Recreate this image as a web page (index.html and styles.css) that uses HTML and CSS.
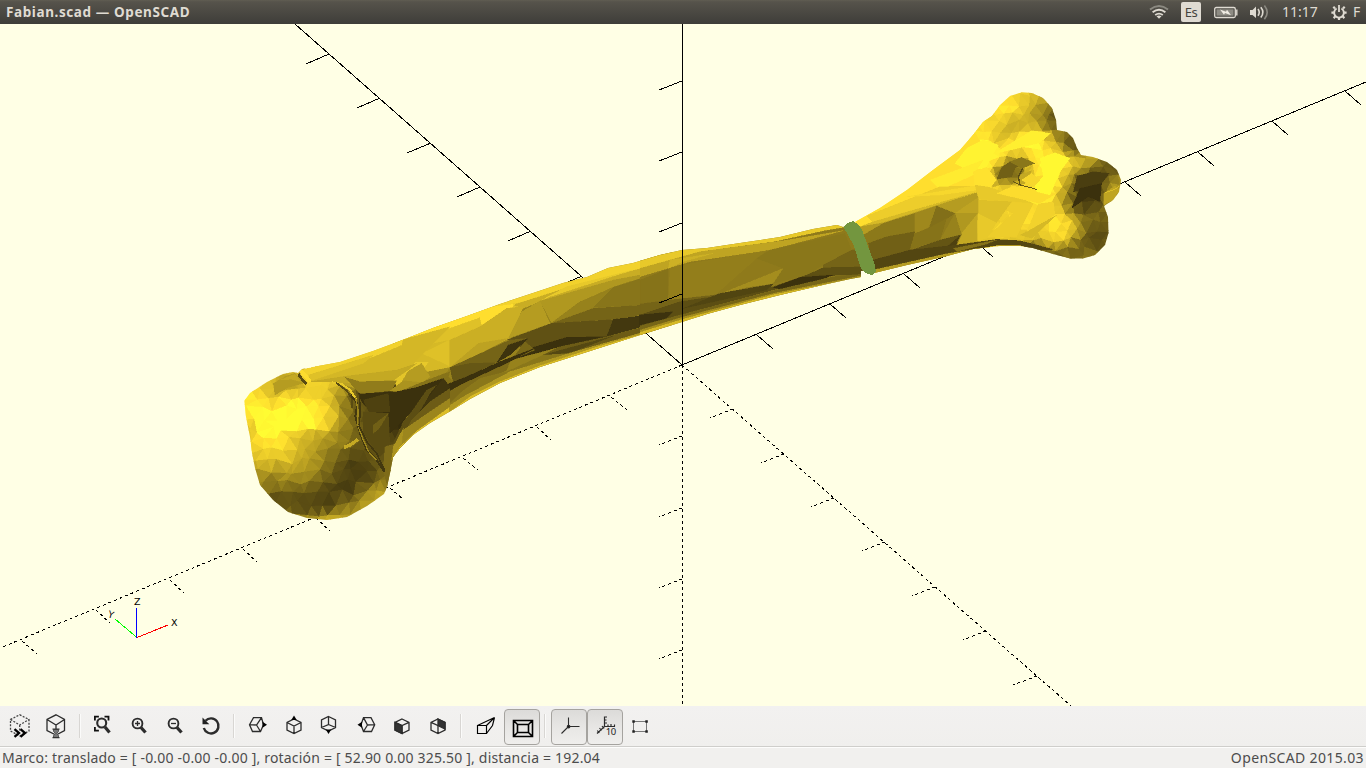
FILE: index.html
```html
<!DOCTYPE html>
<html lang="es">
<head>
<meta charset="utf-8">
<title>Fabian.scad — OpenSCAD</title>
<link rel="stylesheet" href="styles.css">
</head>
<body>
<div class="window">
<header class="titlebar">
  <span class="title">Fabian.scad — OpenSCAD</span>
  <div class="indicators">
    <svg class="ind-wifi" width="20" height="24" viewBox="1149 0 20 24" fill="none" stroke-width="1.9"><path stroke="#8b8981" d="M1150 9.5Q1159 2.500 1168 9.500"/><path stroke="#dfdbd2" d="M1152.600 12.300Q1159 7.300 1165.400 12.300M1155.200 15Q1159 12.200 1162.800 15"/><path fill="#dfdbd2" d="M1156.500 16.300Q1159 14.800 1161.500 16.300L1159 18.800Z"/></svg>
    <span class="ind-lang">Es</span>
    <svg class="ind-battery" width="24" height="24" viewBox="1214 0 24 24"><rect x="1214.700" y="7.500" width="20.600" height="10" rx="1.500" fill="none" stroke="#dfdbd2" stroke-width="1.300"/><rect x="1216.500" y="9.300" width="17" height="6.400" fill="#8e8c84"/><path d="M1236.800 9.500v6" stroke="#dfdbd2" stroke-width="1.400"/><path d="M1220 9.500L1226 11.800L1227 9.800L1231 15.200L1225 13L1224 14.800Z" fill="#f0ece3"/></svg>
    <svg class="ind-sound" width="20" height="24" viewBox="1250 0 20 24" fill="none" stroke-width="1.600"><path fill="#dfdbd2" d="M1250 10h2.500L1256 6.500V18L1252.500 15H1250Z"/><path stroke="#dfdbd2" d="M1258 9Q1260.500 12.400 1258 15.700M1260.800 7.300Q1265 12.400 1260.800 17.500"/><path stroke="#8b8981" d="M1264.400 5.500Q1270 12.400 1264.400 19.200"/></svg>
    <span class="clock">11:17</span>
    <svg class="ind-gear" width="16" height="24" viewBox="1331 0 16 24" fill="none" stroke="#dfdbd2"><path d="M1336.600 8.500A4.900 4.900 0 1 0 1341.400 8.500" stroke-width="2"/><path d="M1339 5v7" stroke-width="1.800"/><path d="M1335 8.500l-1.700-1.700M1343 8.500l1.700-1.700M1333.800 12.700h-2.400M1344.200 12.700h2.400M1335.400 16.300l-1.800 1.800M1342.600 16.300l1.800 1.800M1339 17.500v2.600" stroke-width="2.200"/></svg>
    <span class="user">F</span>
  </div>
</header>

<main class="viewport">
<svg class="scene" width="1366" height="682" viewBox="0 24 1366 682">
  <defs>
    <clipPath id="distal"><path d="M244.300 400.700L250 393L267 382L283 374L293 372L298 373L302 369L340 362L373 351L400 341L433 328L467 316L500 304L533 293L563 283L587 277L608 268L633 263L660 255L682 250L707 248L740 243L780 237L813 229L837 225L843 227L850 225L867 270L861 271V277L850 279L827 284L780 295L740 305L707 314L682 322L640 335L587 352L540 367L500 383L470 399L449 412L430 423L413 435L400 448L393 457L390 473L387 487L384 494L367 506L347 517L327 520L307 518L288 512L273 500L260 485L255 468L252 453L250 437L246 417Z"/></clipPath>
    <clipPath id="proximal"><path d="M855 222L880 208L907 190L933 170L960 150L973 135L983 122L992 116L1000 105L1010 96L1022 92.300L1032 93L1043 98L1052 108L1056 120L1057 130L1067 132L1073 138L1077 148L1081 155L1093 157L1107 162L1117 170L1121 180L1119 192L1113 200L1104 206L1108 217L1108.500 233L1105 245L1095 255L1083 258.500L1070 258.500L1053 254L1033 248L1020 246L1000 246L973 249L947 256L907 265L870 274Z"/></clipPath>
  </defs>
  <g class="axis">
    <path d="M295 24L682 365L1366 82M757 335l16 14M830 304l16 14M904 274l16 14M977 243l16 14M1125 182l16 14M1198 152l16 14M1272 121l16 14M1345 91l16 14M329 54l-23 10M380 98l-23 10M431 143l-24 10M480 187l-23 10M531 231l-23 10M582 276l-23 10"/>
    <path class="dashed" d="M682 365L0 648M682 365L1071 706M611 397l16 13M537 427l14 13M463 458l15 12M390 488l14 12M316 518l14 13M243 549l14 13M170 580l14 13M96 610l14 13M22 641l15 13M733 409l-23 9M784 454l-23 9M834 498l-23 9M885 542l-23 9M935 587l-23 9M986 631l-23 9M1037 676l-24 9"/>
  </g>
  <g clip-path="url(#distal)" id="boneDistal"></g>
  <g clip-path="url(#proximal)" id="boneProximal"></g>
  <path class="band" d="M843.500 227L847 223L853 221L858 224L862 230L875 265L876 272L872 275L865 273L861 269L854 246Z"/>
  <g class="axis">
    <path d="M682.500 24V365M682 81l-23 9M682 152l-23 9M682 223l-23 9M682 294l-23 9"/>
    <path class="dashed" d="M682.500 365V706M682 436l-23 9M682 508l-23 9M682 579l-23 9M682 650l-23 9"/>
  </g>
  <g class="gizmo">
    <path stroke="#f00" d="M137 637.500L168 625"/><path stroke="#0f0" d="M137 637.500L115 619"/><path stroke="#00f" d="M136.500 637.500V608"/>
    <text x="134" y="605">Z</text><text x="171" y="626">X</text><text x="108" y="618" transform="rotate(16 111 615)">Y</text>
  </g>
</svg>
</main>

<nav class="toolbar">
  <button class="tool"><svg viewBox="2 706 36 40"><path d="M19.700 714.800L29 719.500V731L19.700 736L10.500 731V719.500ZM10.500 719.500L19.700 725L29 719.500M19.700 725V731" stroke-dasharray="2 1.400" stroke="#444"/><path d="M14.500 729.200l4.500 3.800-4.500 3.800M20.500 729.200l4.500 3.800-4.500 3.800" stroke="#000" stroke-width="2.300"/></svg></button>
  <button class="tool"><svg viewBox="38 706 36 40"><path d="M56 714.800L64.500 719.500V730.500L56 735L47 730.500V719.500ZM47 719.500L56 725L64.500 719.500M56 725V730"/><path fill="#777" stroke="#555" stroke-width="1" d="M53.500 729.500h5v2l-2 2 2 2v2h-5v-2l2-2-2-2Z"/><path stroke="#333" d="M52.500 729.200h7M52.500 737.700h7"/></svg></button>
  <span class="sep sep-a"></span>
  <button class="tool"><svg viewBox="84 706 36 40"><path stroke="#111" stroke-width="1.800" d="M94.900 720.500v-3.900h4M104.500 716.600h4v3.900M94.900 727v3.700h4"/><circle cx="101.700" cy="723" r="4.500" stroke-width="2.100"/><path stroke-width="3.200" d="M105 727l4.500 5.500"/></svg></button>
  <button class="tool"><svg viewBox="120 706 36 40"><circle cx="137.500" cy="723.500" r="4.900" stroke-width="1.900"/><path d="M135 723.500h5M137.500 721v5"/><path stroke-width="3.300" d="M141 727.500l4.500 5"/></svg></button>
  <button class="tool"><svg viewBox="156 706 36 40"><circle cx="173.500" cy="723.500" r="4.900" stroke-width="1.900"/><path d="M171 723.500h5"/><path stroke-width="3.300" d="M177 727.500l4.500 5"/></svg></button>
  <button class="tool"><svg viewBox="192 706 36 40"><path stroke-width="2.400" d="M205.500 720.800A7.500 7.500 0 1 1 203.800 728"/><path fill="#222" stroke="none" d="M202.500 717.500V724.200H209.300Z"/></svg></button>
  <span class="sep sep-b"></span>
  <button class="tool"><svg viewBox="239 706 36 40"><path d="M249.500 724.700L253.500 717.600L261.500 717.600L263.500 724.800L260.500 731.500L252.500 731.500ZM249.500 724.700L256.500 725L261.500 717.600M256.500 725L260.500 731.500"/><path class="tip" d="M262.500 721.800L267 724.800L262.500 727.800Z"/></svg></button>
  <button class="tool"><svg viewBox="275 706 36 40"><path d="M294 719L301 722.500V730L294 733.500L287 730V722.500ZM287 722.500L294 726L301 722.500M294 726V733.500"/><path class="tip" d="M291.300 720L294 715.500L296.700 720Z"/></svg></button>
  <button class="tool"><svg viewBox="311 706 36 40"><path d="M328.500 716.500L335.500 720V727.500L328.500 731L321.500 727.500V720ZM328.500 716.500V724.500L321.500 727.500M328.500 724.500L335.500 727.500"/><path class="tip" d="M325.800 729.500L328.500 734L331.200 729.500Z"/></svg></button>
  <button class="tool"><svg viewBox="347 706 36 40"><path d="M374.700 724.700L371 717.600L363.500 717.600L361 724.800L363.500 731.500L371.500 731.500ZM374.700 724.700L367.500 725L363.500 717.600M367.500 725L363.500 731.500"/><path class="tip" d="M362 721.800L357.500 724.800L362 727.800Z"/></svg></button>
  <button class="tool"><svg viewBox="383 706 36 40"><path d="M402 719L409 722.300V730L402 733.500L395 730V722.300ZM395 722.300L402 725.600L409 722.300M402 725.600V733.500"/><path fill="#333" d="M395 722.300L402 725.600V733.500L395 730Z"/></svg></button>
  <button class="tool"><svg viewBox="419 706 36 40"><path d="M438 719L445 722.300V730L438 733.500L431 730V722.300ZM431 722.300L438 725.600L445 722.300M438 725.600V733.500"/><path fill="#333" d="M438 719L445 722.300V729L438 725.600Z"/></svg></button>
  <span class="sep sep-c"></span>
  <button class="tool"><svg viewBox="467 706 36 40"><path stroke="#000" stroke-width="1.150" d="M477.500 725.500H486.500V733.500H477.500ZM477.500 725.500L494.500 717.500L486.500 725.500M494.500 717.500L492.500 725.500L486.500 733.500"/></svg></button>
  <button class="tool pressed"><svg viewBox="503 706 36 40"><path stroke="#000" stroke-width="1.600" d="M513.500 720.500H532.500V736.500H513.500ZM517.500 724.500H528.500V732.500H517.500ZM513.500 720.500l4 4M532.500 720.500l-4 4M513.500 736.500l4-4M532.500 736.500l-4-4"/></svg></button>
  <span class="sep sep-d"></span>
  <button class="tool pressed"><svg viewBox="550 706 36 40"><path stroke-width="1.100" d="M568.500 717.500V726.500H579.500M568.500 726.500L561.500 733.500"/><circle cx="568.600" cy="726.600" r="1.200" fill="#111"/></svg></button>
  <button class="tool pressed"><svg viewBox="586 706 36 40"><path stroke-width="1.200" d="M604.500 716.500V726.500H615M604.500 726.500L597 733.500M604.500 717h2.500M604.500 720h2M604.500 723h2.500M608 726.500v-2M611 726.500v-2.500M614.500 726.500v-2M602 726l2 2.500M599.500 728l2 2.500M597.300 730.500l2 2.500"/><text x="605.700" y="735.200">10</text></svg></button>
  <button class="tool"><svg viewBox="622 706 36 40"><path stroke="#777" stroke-width="1" d="M633.500 721.500H646.500V731.500H633.500Z"/><path fill="#222" stroke="none" d="M632.300 720.300h2.500v2.500h-2.500ZM645.300 720.300h2.500v2.500h-2.500ZM632.300 730.300h2.500v2.500h-2.500ZM645.300 730.300h2.500v2.500h-2.500Z"/></svg></button>
</nav>

<footer class="statusbar"><span class="camera">Marco: translado = [ -0.00 -0.00 -0.00 ], rotación = [ 52.90 0.00 325.50 ], distancia = 192.04</span><span class="version">OpenSCAD 2015.03</span></footer>
</div>
<script src="mesh.js"></script>
</body>
</html>
```

FILE: styles.css
```css
* { box-sizing: border-box; }
body { margin: 0; overflow: hidden; font-family: "Noto Sans", "Open Sans", sans-serif; }
.window { width: 1366px; height: 768px; display: flex; flex-direction: column; background: #f1f0ee; }
.titlebar { height: 24px; flex: none; display: flex; align-items: center; justify-content: space-between; padding-left: 6px; background: linear-gradient(#605d52 0, #56534b 8%, #3e3d39 100%); color: #dfdbd2; }
.title { font-size: 13.500px; font-weight: 700; line-height: 24px; white-space: pre; letter-spacing: .6px; }
.indicators { width: 217px; height: 24px; display: flex; align-items: center; font-size: 14px; }
.indicators svg { display: block; flex: none; }
.ind-lang { width: 20px; height: 20px; margin: 0 13px 0 12px; border-radius: 2px; background: #dfdbd2; color: #45433e; font-size: 13px; line-height: 20px; text-align: center; letter-spacing: -.5px; }
.ind-sound { margin-left: 12px; }
.clock { width: 37px; margin: 0 12px; line-height: 24px; white-space: nowrap; }
.user { margin-left: 6px; line-height: 24px; }
.viewport { height: 682px; flex: none; background: #ffffe5; }
.scene { display: block; shape-rendering: crispEdges; }
.axis path { fill: none; stroke: #000; stroke-width: 1; }
.axis .dashed { stroke-dasharray: 3 3; }
.band { fill: #73963f; }
.gizmo path { fill: none; stroke-width: 1; }
.gizmo text { font: 9.500px "DejaVu Sans", sans-serif; fill: #000; }
.toolbar { height: 40px; flex: none; padding-left: 2px; display: flex; align-items: center; background: linear-gradient(#f2f1f0, #f0efed); }
.tool { position: relative; width: 36px; height: 40px; flex: none; padding: 0; border: 0; background: none; }
.tool svg { display: block; width: 36px; height: 40px; position: relative; fill: none; stroke: #2c2c2c; stroke-width: 1.300; }
.tool text { font: 9.500px "Noto Sans", sans-serif; fill: #222; stroke: none; letter-spacing: -.3px; }
.tool .tip { fill: #000; stroke: none; }
.tool.pressed::before { content: ""; position: absolute; left: 1px; top: 3px; width: 34px; height: 34px; border: 1px solid #a5a39f; border-radius: 4px; background: linear-gradient(#dcdbd9, #e9e8e6 60%, #efeeec); }
.sep { height: 24px; flex: none; background: linear-gradient(90deg, transparent 5px, #d8d6d3 5px 6px, #fbfbfa 6px 7px, transparent 7px); }
.sep-a { width: 10px; }
.sep-b { width: 11px; }
.sep-c { width: 12px; }
.sep-d { width: 11px; }
.statusbar { height: 22px; flex: none; display: flex; justify-content: space-between; padding: 0 2px; border-top: 1px solid #cfcecb; box-shadow: inset 0 1px #fdfdfc; color: #4c4c4c; font-size: 14px; line-height: 22px; white-space: nowrap; letter-spacing: .19px; }
.version { letter-spacing: .37px; }
```

FILE: mesh.js
```javascript
// Flat-shaded rendering of the two bone pieces.
const NS = 'http://www.w3.org/2000/svg';
const ramp = [[0, 52, 43, 12], [25, 98, 83, 20], [50, 151, 130, 28], [70, 201, 173, 36], [85, 234, 203, 42], [93, 255, 222, 46], [100, 255, 252, 50]];
function shade(v) {
  v = Math.max(0, Math.min(100, v));
  let i = 1;
  while (i < ramp.length - 1 && ramp[i][0] < v) i++;
  const a = ramp[i - 1], b = ramp[i], t = (v - a[0]) / (b[0] - a[0]);
  return 'rgb(' + [1, 2, 3].map(k => Math.round(a[k] + (b[k] - a[k]) * t)).join(',') + ')';
}
function layer(id, x, y) {
  const g = document.createElementNS(NS, 'g');
  g.setAttribute('transform', `translate(${x} ${y}) scale(.33333)`);
  document.getElementById(id).appendChild(g);
  return g;
}
function facet(g, v, pts) {
  const p = document.createElementNS(NS, 'polygon'), c = shade(v);
  p.setAttribute('points', pts);
  p.setAttribute('fill', c);
  p.setAttribute('stroke', c);
  p.setAttribute('stroke-width', '1');
  g.appendChild(p);
}
function streak(g, v, w, pts) {
  const p = document.createElementNS(NS, 'polyline');
  p.setAttribute('points', pts);
  p.setAttribute('fill', 'none');
  p.setAttribute('stroke', shade(v));
  p.setAttribute('stroke-width', w);
  g.appendChild(p);
}
// Triangulated surface whose facet brightness is interpolated from light samples.
function mosaic(g, x0, y0, x1, y1, step, samples) {
  const s = samples.trim().split(/\s+/).map(t => t.split(',').map(Number));
  const rnd = n => { const r = Math.sin(n * 127.1) * 43758.5453; return r - Math.floor(r); };
  const at = (i, j) => [x0 + (i + (j % 2) * .5 + (rnd(i * 57 + j * 131) - .5) * .6) * step, y0 + (j + (rnd(i * 91 + j * 37 + 7) - .5) * .6) * step * .9];
  const light = (x, y) => {
    let n = 0, d = 0;
    for (const q of s) {
      const w = Math.exp(-((q[0] - x) ** 2 + (q[1] - y) ** 2) / 560) + 1e-9;
      n += w * q[2]; d += w;
    }
    return n / d;
  };
  const nx = (x1 - x0) / step, ny = (y1 - y0) / (step * .9);
  for (let j = 0; j < ny; j++) for (let i = -1; i < nx; i++) {
    const a = at(i, j), b = at(i + 1, j), c = at(i, j + 1), d = at(i + 1, j + 1);
    const tris = j % 2 ? [[a, b, d], [a, d, c]] : [[a, b, c], [b, d, c]];
    tris.forEach((t, k) => {
      const cx = (t[0][0] + t[1][0] + t[2][0]) / 3, cy = (t[0][1] + t[1][1] + t[2][1]) / 3;
      facet(g, light(cx, cy) + 2 + (rnd(i * 17 + j * 71 + k * 3) - .5) * 7, t.map(p => p.join(',')).join(' '));
    });
  }
}
function facets(g, list) { list.forEach(f => facet(g, f[0], f[1])); }

// Shaft, middle section
const mid = layer('boneDistal', 400, 230);
facets(mid, [
  [50, '-20,700 -20,200 820,60 820,320'],
  [88, '-10,333 140,270 400,180 625,105 790,70 790,100 600,150 420,200 240,265 -10,350'],
  [80, '-10,350 240,262 340,222 440,200 250,290 150,330 -10,365'],
  [93, '-10,333 140,278 280,230 345,222 330,240 245,285 240,262 -10,350'],
  [70, '340,225 480,180 780,100 780,125 640,150 420,215 370,235'],
  [84, '420,213 500,170 700,120 620,145 450,200'],
  [76, '-10,365 150,330 150,412 60,430 -10,440'],
  [80, '65,370 148,330 148,408'],
  [71, '150,330 240,290 320,235 370,230 330,325 150,412'],
  [84, '-10,395 85,397 60,430 15,450'],
  [62, '420,213 365,245 325,325 450,280'],
  [65, '150,412 235,340 325,325 250,365'],
  [60, '420,213 640,170 540,215 455,278'],
  [60, '420,213 640,150 790,122 640,170 540,205'],
  [50, '455,278 540,215 780,125 780,145 580,235'],
  [43, '580,232 640,172 790,125 790,222'],
  [34, '455,280 580,235 780,222 780,245 640,268'],
  [24, '320,330 455,280 650,268 620,320 500,322 380,370 340,330'],
  [8, '640,268 780,250 780,275 620,320'],
  [4, '500,322 620,320 480,350 400,372 330,390 390,355'],
  [30, '620,320 780,278 780,290 520,370 430,375 480,350'],
  [18, '430,375 520,350 640,318 520,365 450,380'],
  [34, '150,412 330,330 380,325 290,395 180,440'],
  [5, '325,345 385,325 330,375 290,398'],
  [35, '335,390 375,335 405,360'],
  [27, '150,412 210,400 290,398 160,460'],
  [55, '-10,450 60,430 150,412 130,440 60,460 -10,470'],
  [42, '-10,470 60,460 135,430 160,455 80,485 -10,490'],
  [8, '-10,490 90,485 190,455 120,520 100,545 -10,560'],
  [28, '0,480 40,485 65,515 0,515'],
  [38, '90,545 120,500 200,455 330,395 320,420 200,480 120,545'],
  [4, '80,487 200,440 300,395 410,352 330,395 190,460 120,495'],
  [44, '130,540 185,485 240,445 320,425 430,375 520,370 330,440'],
  [60, '120,545 190,500 330,425 540,360 780,293 780,302 420,412 300,460 160,545'],
  [78, '150,545 210,500 300,455 420,407 600,348 780,298 780,306 600,360 420,418 300,468']
]);
// Shaft, section next to the cut
const cut = layer('boneDistal', 640, 200);
facets(cut, [
  [46, '0,150 700,60 700,300 0,420'],
  [84, '0,175 127,145 420,105 590,65 620,80 560,90 400,125 180,155 0,205'],
  [66, '0,205 180,155 430,122 610,92 390,150 150,185 0,230'],
  [72, '85,205 90,180 220,160 130,185'],
  [42, '0,240 85,207 85,300 0,315'],
  [48, '125,195 380,152 350,175 220,290 125,298 85,295 90,205'],
  [44, '350,175 390,150 615,100 635,150 550,195 430,205'],
  [55, '430,205 400,250 320,262 220,290'],
  [44, '430,205 550,195 500,225 400,250'],
  [34, '550,195 635,150 680,150 690,200 550,203'],
  [23, '500,225 550,203 690,200 690,222 550,228'],
  [34, '0,312 90,300 240,283 200,300 0,345'],
  [22, '0,345 120,305 220,290 400,260 500,225 580,225 400,270 120,345 0,380'],
  [16, '130,325 240,280 400,252 380,270 200,310'],
  [4, '400,262 480,232 580,225 500,255 430,270'],
  [5, '-3,345 100,335 80,355 -3,376'],
  [35, '0,378 120,345 400,272 580,230 670,222 670,228 400,280 127,350 0,390'],
  [55, '0,390 127,352 400,280 670,226 670,236 127,362 0,402'],
  [76, '0,397 127,358 400,284 670,230 670,245 127,372 0,415']
]);
// Head and neck of the distal piece
const head = layer('boneDistal', 230, 350);
mosaic(head, 20, 50, 490, 530, 35, `190,75,70 150,85,72 110,105,84 240,80,88 80,125,90 130,120,66 170,105,60 210,110,70 250,110,84 300,105,82 345,100,62
50,155,93 90,160,97 130,150,86 180,145,94 230,140,92 280,135,86 320,130,62 350,140,48 375,150,25 60,190,92 100,200,97 145,180,100 190,190,99 240,185,93 280,180,93 305,185,78 340,190,53 370,200,28
60,240,80 100,240,99 150,225,100 200,215,97 260,215,99 290,220,86 320,230,65 350,230,46 370,245,25 75,280,88 110,280,93 150,270,94 195,265,82 235,275,72 280,265,65 320,270,50 350,265,55 380,270,35
75,320,80 120,320,88 160,310,85 205,310,72 250,300,65 290,310,48 330,310,33 370,300,22 410,310,20 85,350,70 130,350,65 170,350,70 210,350,66 250,345,55 290,345,42 330,345,22 370,345,10 410,345,10 450,350,25
90,385,50 130,385,45 170,385,58 210,385,52 250,385,48 290,385,30 330,385,22 370,380,14 410,385,14 450,385,30 475,390,50 110,420,45 150,415,38 190,420,30 230,420,35 270,415,25 310,420,12 350,410,5 390,415,25 430,415,50 460,420,62
135,450,10 170,445,28 210,450,15 250,450,12 290,445,8 330,445,25 370,445,30 410,450,60 440,445,68 160,475,28 200,475,12 240,475,20 280,470,12 320,470,30 360,475,50 400,470,66 190,490,40 230,505,60 280,505,65 330,500,68
400,140,20 420,200,22 450,170,15 450,230,28 400,250,30 430,280,22 460,260,12 480,300,20 440,320,22 490,220,2 470,340,45`);
facets(head, [
  [75, '222,62 330,20 660,-70 570,20 500,95 400,100 310,95 240,95'],
  [88, '330,30 520,-40 515,-15 430,20 320,55 235,80 215,60'],
  [80, '235,75 430,15 400,40 245,92'],
  [68, '240,95 350,78 500,60 560,40 535,60 490,92 385,97'],
  [62, '500,95 540,60 575,40 600,80 575,100 530,120'],
  [82, '490,93 535,60 515,95 505,116'],
  [47, '345,82 390,95 500,92 485,122 390,132'],
  [58, '480,122 520,92 580,98 560,110 500,128'],
  [42, '520,120 580,95 660,65 655,80 590,112'],
  [4, '385,132 500,125 560,112 640,85 590,150 530,200 480,250 440,200 398,160'],
  [14, '400,150 475,130 480,185 440,185 425,205'],
  [20, '400,185 475,190 480,290 450,320 400,250'],
  [32, '430,225 475,190 448,235 430,250'],
  [22, '545,185 590,120 620,105 600,130 575,180 530,235 495,280 480,300 520,215'],
  [7, '590,150 640,85 660,110 600,155 560,200'],
  [30, '545,210 600,155 660,115 660,145 600,185 530,240'],
  [52, '500,290 520,240 600,185 660,145 660,180 560,245 500,310'],
  [78, '480,330 500,300 560,243 658,172 658,190 510,310 490,330'],
  [38, '465,290 500,280 493,330 475,420 460,360'],
  [58, '490,290 520,235 515,280 485,330'],
  [62, '130,100 165,80 195,70 222,100 175,112 135,135'],
  [68, '150,90 195,72 212,95 185,88']
]);
streak(head, 20, 8, '205,72 218,90 230,102');
streak(head, 92, 12, '212,62 228,80 240,96');
streak(head, 84, 6, '305,97 335,102 360,120 380,150');
streak(head, 20, 5, '318,98 350,122 365,145 366,175');
streak(head, 8, 6, '362,135 382,160 376,200 392,255 410,300 440,330 463,365');
streak(head, 52, 4, '376,140 384,180 383,225 402,275 416,305 440,330');
streak(head, 8, 5, '388,130 390,180 388,230 410,275 440,310 463,360');
streak(head, 68, 10, '342,292 362,284 384,268');

// Proximal piece
const knee = layer('boneProximal', 840, 80);
facets(knee, [[93, '0,600 0,400 300,200 460,60 460,600'], [46, '40,445 290,385 345,400 412,400 412,600 40,600']]);
mosaic(knee, 410, 20, 860, 560, 30, `510,60,90 545,55,86 580,55,78 610,70,60 480,90,92 515,85,97 550,85,80 585,85,65 615,95,46 638,110,20 445,115,84 480,115,92 520,115,76 560,110,68 600,120,52 630,135,25
430,150,92 470,150,80 510,145,64 550,145,70 590,140,70 630,140,60 648,145,15 400,185,93 440,185,99 480,175,74 520,170,86 560,170,97 600,165,92 640,170,75 670,170,45 695,185,12
360,230,95 410,215,99 460,210,96 500,205,94 540,200,99 590,195,99 630,195,88 660,205,76 690,205,40 705,210,20 400,250,100 450,240,98 490,235,92 530,240,50 570,235,92 600,240,99 640,240,100 680,230,97 720,238,80 760,240,65 800,258,30
390,290,98 440,285,97 480,280,42 510,265,30 540,270,40 570,265,80 600,270,99 640,270,100 680,270,93 710,275,70 740,270,45 780,268,30 820,275,15 380,320,96 430,320,92 480,300,60 520,295,45 560,300,92 590,295,75 620,305,100 650,300,98 680,300,75 700,295,40 730,300,15 770,290,10 800,300,35 825,300,60
400,345,88 450,335,92 510,330,90 560,330,92 600,335,97 640,330,98 675,325,65 705,330,35 735,325,5 770,320,12 800,330,45 825,330,62 430,370,87 480,365,90 540,355,91 600,365,92 640,365,90 670,360,62 700,360,18 740,350,8 775,355,8 800,360,72
440,400,82 500,395,86 560,395,90 620,400,92 660,395,85 690,385,45 720,380,20 760,380,15 785,395,30 440,440,84 500,430,87 560,430,89 610,430,84 650,430,92 680,430,90 710,425,70 735,415,30 765,420,42 795,430,28
440,470,84 500,465,84 550,460,88 590,455,82 640,465,92 680,460,92 710,455,70 735,450,35 770,455,22 795,460,20 440,490,80 540,482,76 600,490,78 640,490,84 680,490,80 720,485,35 750,480,12 780,485,15 797,485,35
590,502,20 640,515,18 680,515,22 720,515,15 760,510,40 730,530,50 690,532,45`);
facets(knee, [
  [93, '40,424 280,262 400,150 430,200 410,340 300,345 90,425'],
  [98, '345,250 380,205 430,180 475,195 440,260 390,275'],
  [96, '270,300 430,240 400,285 300,330'],
  [94, '400,275 440,262 470,300 440,335 405,330'],
  [86, '80,408 300,320 410,318 415,338 280,372 100,428'],
  [90, '200,350 400,318 450,325 300,345'],
  [76, '60,440 100,425 290,370 405,338 290,380 225,400 75,455'],
  [84, '405,315 450,322 580,370 415,358'],
  [86, '415,358 580,370 545,440 530,470 440,472 520,400'],
  [79, '410,360 515,365 470,428 412,400'],
  [84, '413,400 470,428 440,475 413,485'],
  [76, '540,465 650,405 575,475'],
  [88, '595,372 640,365 645,405 560,455'],
  [92, '520,318 590,330 650,340 600,370 470,340'],
  [62, '62,440 130,428 285,378 410,338 415,360 345,400 290,378 225,400 130,445 70,465'],
  [45, '70,465 130,430 225,400 225,455 140,470 85,490'],
  [53, '225,400 290,378 270,440 225,462'],
  [40, '290,378 345,400 315,420 265,450'],
  [66, '345,400 415,352 414,402 385,405'],
  [60, '345,400 412,400 412,420 365,465'],
  [68, '412,402 412,488 350,500 365,460'],
  [50, '300,480 345,400 365,465 345,500'],
  [32, '85,490 140,470 225,455 210,510 120,540 95,545'],
  [42, '225,460 265,445 320,415 300,480 210,508'],
  [26, '200,515 300,480 360,465 330,505 220,530'],
  [14, '310,510 362,465 345,500'],
  [17, '80,545 210,510 340,496 470,478 540,482 640,508 600,512 540,496 470,496 330,522 90,575'],
  [42, '340,505 470,480 440,492 350,515'],
  [62, '90,585 320,532 410,506 320,521 90,572'],
  [97, '460,222 575,152 632,160 600,188 520,208'],
  [99, '600,235 645,218 690,235 660,275 630,345 590,335 585,315 610,290'],
  [32, '470,298 485,262 510,245 555,245 525,265 515,290'],
  [44, '510,245 545,232 585,250 545,265'],
  [68, '540,285 575,272 555,310 535,318'],
  [90, '545,300 575,280 600,300 580,322'],
  [12, '700,335 712,288 760,275 808,280 785,310 750,330'],
  [4, '695,385 720,325 785,310 780,365 745,350'],
  [66, '792,340 825,318 838,330 820,358 792,375']
]);
streak(knee, 28, 3, '520,305 540,315 590,328');
streak(knee, 20, 4, '548,265 535,290 540,315');
streak(knee, 78, 3, '795,338 820,330 836,320');
```
